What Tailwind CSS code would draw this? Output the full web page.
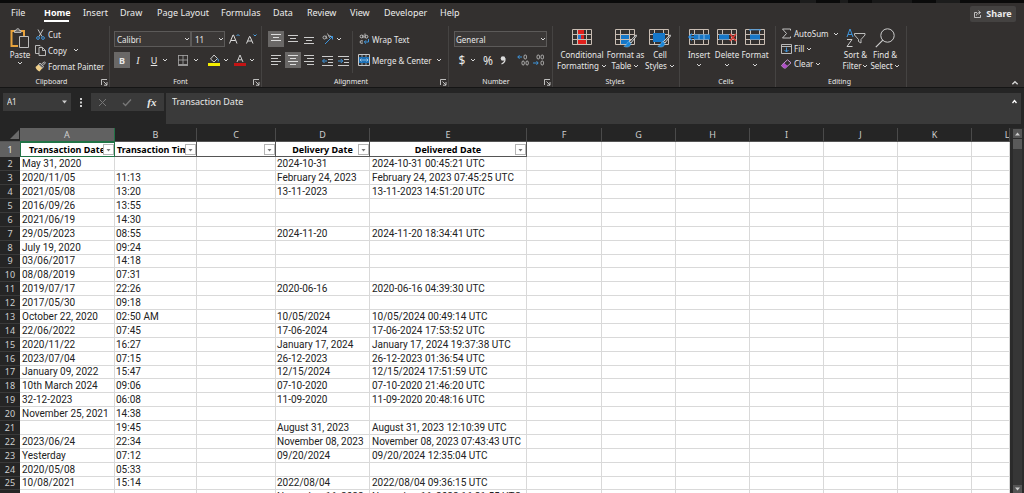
<!DOCTYPE html>
<html lang="en">
<head>
    <meta charset="UTF-8">
    <meta name="viewport" content="width=device-width, initial-scale=1.0">
    <title>Transactions</title>
    <script src="https://cdn.jsdelivr.net/npm/@tailwindcss/browser@4"></script>
</head>
<body class="h-screen overflow-hidden flex flex-col bg-[#252525] text-[#e8e8e8] font-['Noto_Sans',sans-serif] text-[8px] leading-[11px]">

    <!-- shared symbols -->
    <svg class="hidden">
        <symbol id="chev" viewBox="0 0 6 6"><path d="M1 2l2 2 2-2" fill="none" stroke="#d8d8d8" stroke-width="1"/></symbol>
        <symbol id="launch" viewBox="0 0 7 7"><path d="M.5 6V.5H6M2.500 2.500l3.500 3.500M6 3v3.200H3" fill="none" stroke="#cfcfcf" stroke-width=".9"/></symbol>
        <symbol id="grid" viewBox="0 0 20 17"><path d="M.5.5h19v15H.5zM.5 5.500h19M.5 10.500h19M5.500.5v15M14.500.5v15" fill="none" stroke="#c9bdb3" stroke-width="1"/></symbol>
        <symbol id="brush" viewBox="0 0 14 14"><path d="M13 .8L6.500 7.500l1.500 1.500L13.500 2z" fill="#4b4b4b" stroke="#ddd" stroke-width=".9"/><path d="M6 7.500C3.500 7.800 4.500 11 .8 12.300c3 1.500 7 .7 7-3z" fill="#1a86d8" stroke="#7fc0f0" stroke-width=".5"/></symbol>
    </svg>

    <div class="h-[3px] shrink-0 bg-[#0a0a0a] flex justify-end gap-6 pr-16">
        <span class="w-4 bg-[#1c1c1c]"></span>
        <span class="w-2 bg-[#1c1c1c]"></span>
        <span class="w-10 bg-[#181818]"></span>
        <span class="w-6 bg-[#1c1c1c]"></span>
    </div>

    <header class="shrink-0 bg-[#33302f]">
        <nav class="flex items-start h-[22px] pl-[11px] pr-2 pt-[3px] text-[9px] leading-[14px] text-[#ececec]">
            <a href="#" class="w-[33px]">File</a>
            <a href="#" class="w-[39px] font-bold"><span class="block w-[25px] border-b-2 border-white text-white">Home</span></a>
            <a href="#" class="w-[37px]">Insert</a>
            <a href="#" class="w-[37px]">Draw</a>
            <a href="#" class="w-[64px] whitespace-nowrap">Page Layout</a>
            <a href="#" class="w-[52px]">Formulas</a>
            <a href="#" class="w-[34px]">Data</a>
            <a href="#" class="w-[43px]">Review</a>
            <a href="#" class="w-[34px]">View</a>
            <a href="#" class="w-[56px]">Developer</a>
            <a href="#">Help</a>
            <button class="ml-auto h-4 w-[46px] flex items-center justify-center gap-1 bg-[#444241] rounded-xs font-bold">
                <svg class="w-2 h-2" viewBox="0 0 8 8"><path d="M3 2.500H.5v5h6V5M2.500 5.500C2.500 3.500 4 2.500 6 2.500M4.500.7l2 1.800-2 1.800" fill="none" stroke="#ddd" stroke-width=".8"/></svg>
                Share
            </button>
        </nav>

        <div class="flex h-[62px] pt-px">
            <!-- Clipboard -->
            <section class="w-[110px] shrink-0 border-r border-[#454342] flex flex-col pl-[8px]">
                <div class="flex h-[51px]">
                    <button class="w-[24px] h-[45px] flex flex-col items-center pt-[2px]">
                        <svg class="w-5 h-[21px] shrink-0" viewBox="0 0 20 21">
                            <path d="M8 18H1.500V3H14v5" fill="none" stroke="#e8a33d" stroke-width="2"/>
                            <path d="M4.500 4.500V2.500H6C6 0 9.500 0 9.500 2.500H11v2z" fill="#6b6b6b" stroke="#ccc" stroke-width=".8"/>
                            <path d="M9.500 8.500h9v11h-9z" fill="#33302f" stroke="#bdbdbd" stroke-width="1"/>
                        </svg>
                        <span>Paste</span>
                        <svg class="w-[6px] h-[6px]"><use href="#chev"/></svg>
                    </button>
                    <div class="flex flex-col pl-[3px] whitespace-nowrap">
                        <button class="h-4 flex items-center gap-[2px]">
                            <svg class="w-[11px] h-[11px]" viewBox="0 0 11 11"><path d="M3 .5l4 7M8 .5l-4 7" stroke="#c8c8c8" fill="none"/><circle cx="3" cy="9" r="1.400" fill="none" stroke="#3f95dc"/><circle cx="8" cy="9" r="1.400" fill="none" stroke="#3f95dc"/></svg>
                            Cut
                        </button>
                        <button class="h-4 flex items-center gap-[2px]">
                            <svg class="w-[11px] h-[11px]" viewBox="0 0 11 11"><path d="M4 8.500H.5v-8H5l1 1" fill="none" stroke="#c8c8c8" stroke-width=".9"/><path d="M4 2.500h3.500l3 3v5H4zM7.500 2.500v3h3" fill="none" stroke="#c8c8c8" stroke-width=".9"/></svg>
                            Copy
                            <svg class="w-[6px] h-[6px] ml-1"><use href="#chev"/></svg>
                        </button>
                        <button class="h-4 flex items-center gap-[2px]">
                            <svg class="w-[11px] h-[11px]" viewBox="0 0 11 11"><path d="M.5 6l3-2.500 4 3.500-3 3.500C2.500 10 1 8 .5 6z" fill="#f0cf8a"/><path d="M3.500 3.500L5 2l3.500 3.500L7.500 7zM6.500 3L9.500.8l1 1L8 4.500" fill="#5a5a5a" stroke="#ccc" stroke-width=".8"/></svg>
                            Format Painter
                        </button>
                    </div>
                </div>
                <div class="flex items-center text-[7px] leading-[10px]">
                    <span class="flex-1 text-center pr-[6px]">Clipboard</span>
                    <svg class="w-[7px] h-[7px] mr-[1px]"><use href="#launch"/></svg>
                </div>
            </section>

            <!-- Font -->
            <section class="w-[152px] shrink-0 border-r border-[#454342] flex flex-col pl-[4px]">
                <div class="flex flex-col h-[51px] pt-[5px] gap-[5px]">
                    <div class="flex h-4 items-center">
                        <div class="relative w-[77px] h-4">
                            <select aria-label="Font name" class="appearance-none w-full h-full bg-[#3b3837] border border-[#5c5a59] pl-[2px] leading-[13px]"><option>Calibri</option></select>
                            <svg class="absolute right-[1px] top-[5px] w-[6px] h-[6px]"><use href="#chev"/></svg>
                        </div>
                        <div class="relative w-[34px] h-4">
                            <select aria-label="Font size" class="appearance-none w-full h-full bg-[#3b3837] border border-[#5c5a59] pl-[3px] leading-[13px]"><option>11</option></select>
                            <svg class="absolute right-[1px] top-[5px] w-[6px] h-[6px]"><use href="#chev"/></svg>
                        </div>
                        <button aria-label="Increase font size" class="ml-1"><svg class="w-[11px] h-[12px]" viewBox="0 0 11 12"><path d="M.5 10.500L4 2h.5L8 10.500M2 7.500h4.500" fill="none" stroke="#ddd"/><path d="M7.500 3L9 1.500 10.500 3" fill="none" stroke="#4ea0e0"/></svg></button>
                        <button aria-label="Decrease font size" class="ml-[6px]"><svg class="w-[11px] h-[12px]" viewBox="0 0 11 12"><path d="M.5 10.500L3.500 3.500H4l3 7M1.800 8h4" fill="none" stroke="#ddd"/><path d="M7.500 1.500L9 3l1.500-1.500" fill="none" stroke="#4ea0e0"/></svg></button>
                    </div>
                    <div class="flex h-4 items-center">
                        <button class="w-4 h-4 bg-[#6a6867] font-bold text-[9px]">B</button>
                        <button class="w-4 italic font-['Liberation_Serif',serif] text-[10px]">I</button>
                        <button class="w-4 underline text-[9px]">U</button>
                        <svg class="w-[6px] h-[6px] mr-[9px]"><use href="#chev"/></svg>
                        <button aria-label="Borders"><svg class="w-[12px] h-[12px]" viewBox="0 0 12 12"><path d="M1 1.500h10M1.500 1v9M10.500 1v9M6 1v9M1 6h10" stroke="#aaa" stroke-width=".8" fill="none"/><path d="M1 11h10" stroke="#ddd" stroke-width="1.200"/></svg></button>
                        <svg class="w-[6px] h-[6px] ml-[4px] mr-[9px]"><use href="#chev"/></svg>
                        <button aria-label="Fill colour"><svg class="w-[12px] h-[12px]" viewBox="0 0 12 12"><path d="M6 1L2.500 5 6 8l3.500-3.500z" fill="none" stroke="#ddd" stroke-width=".9"/><path d="M9.500 4.500q1.500 1.500.7 3" stroke="#4ea0e0" fill="none"/><path d="M0 9h12v3H0z" fill="#f4ee00"/></svg></button>
                        <svg class="w-[6px] h-[6px] ml-[3px] mr-[5px]"><use href="#chev"/></svg>
                        <button aria-label="Font colour"><svg class="w-[12px] h-[12px]" viewBox="0 0 12 12"><path d="M3 8L6 1l3 7M4 5.800h4" fill="none" stroke="#ddd" stroke-width=".9"/><path d="M0 9h12v3H0z" fill="#c41414"/></svg></button>
                        <svg class="w-[6px] h-[6px] ml-[3px]"><use href="#chev"/></svg>
                    </div>
                </div>
                <div class="flex items-center text-[7px] leading-[10px]">
                    <span class="flex-1 text-center pr-[6px]">Font</span>
                    <svg class="w-[7px] h-[7px] mr-[1px]"><use href="#launch"/></svg>
                </div>
            </section>

            <!-- Alignment -->
            <section class="w-[187px] shrink-0 border-r border-[#454342] flex flex-col pl-[6px]">
                <div class="flex h-[51px] pt-[5px]">
                    <div class="w-[50px] grid grid-cols-3 gap-y-[5px] content-start">
                        <button aria-label="Top align" class="w-4 h-4 bg-[#6a6867] flex items-center justify-center"><svg class="w-3 h-3" viewBox="0 0 12 12"><path d="M1 1.500h10M3 4.500h6M1 7.500h10" stroke="#ddd"/></svg></button>
                        <button aria-label="Middle align" class="w-4 h-4 flex items-center justify-center"><svg class="w-3 h-3" viewBox="0 0 12 12"><path d="M1 2.500h10M3 5.500h6M1 8.500h10" stroke="#ccc"/></svg></button>
                        <button aria-label="Bottom align" class="w-4 h-4 flex items-center justify-center"><svg class="w-3 h-3" viewBox="0 0 12 12"><path d="M1 4.500h10M3 7.500h6M1 10.500h10" stroke="#ccc"/></svg></button>
                        <button aria-label="Align left" class="w-4 h-4 flex items-center justify-center"><svg class="w-3 h-3" viewBox="0 0 12 12"><path d="M1 1.500h10M1 4.500h7M1 7.500h10M1 10.500h7" stroke="#ccc"/></svg></button>
                        <button aria-label="Center" class="w-4 h-4 bg-[#6a6867] flex items-center justify-center"><svg class="w-3 h-3" viewBox="0 0 12 12"><path d="M1 1.500h10M3 4.500h6M1 7.500h10M3 10.500h6" stroke="#ddd"/></svg></button>
                        <button aria-label="Align right" class="w-4 h-4 flex items-center justify-center"><svg class="w-3 h-3" viewBox="0 0 12 12"><path d="M1 1.500h10M4 4.500h7M1 7.500h10M4 10.500h7" stroke="#ccc"/></svg></button>
                    </div>
                    <div class="w-[35px] pl-[4px] flex flex-col gap-[5px] border-r border-[#454342] mb-1">
                        <div class="h-4 flex items-center">
                            <button aria-label="Orientation"><svg class="w-3 h-3" viewBox="0 0 12 12"><path d="M3 11L10.500 3.500M7.500 3.500h3v3" fill="none" stroke="#3f95dc"/><circle cx="2.500" cy="4.500" r="1.500" fill="none" stroke="#ccc" stroke-width=".8"/><path d="M4 2.500L5 6M5.500.5l2 4q2-1 0-2.500" fill="none" stroke="#ccc" stroke-width=".8"/></svg></button>
                            <svg class="w-[6px] h-[6px] ml-[2px]"><use href="#chev"/></svg>
                        </div>
                        <div class="h-4 flex items-center gap-[5px]">
                            <button aria-label="Decrease indent"><svg class="w-[11px] h-[11px]" viewBox="0 0 11 11"><path d="M0 1.500h11M6 4.500h5M6 7.500h5M0 10.500h11" stroke="#ccc"/><path d="M5 6H.8M2.500 4l-2 2 2 2" fill="none" stroke="#3f95dc"/></svg></button>
                            <button aria-label="Increase indent"><svg class="w-[11px] h-[11px]" viewBox="0 0 11 11"><path d="M0 1.500h11M6 4.500h5M6 7.500h5M0 10.500h11" stroke="#ccc"/><path d="M0 6h4.500M2.800 4l2 2-2 2" fill="none" stroke="#3f95dc"/></svg></button>
                        </div>
                    </div>
                    <div class="flex flex-col gap-[5px] pl-[5px] whitespace-nowrap">
                        <button class="h-4 flex items-center gap-[2px]">
                            <svg class="w-3 h-3" viewBox="0 0 12 12"><circle cx="3.500" cy="3.500" r="1.400" fill="none" stroke="#ccc" stroke-width=".9"/><path d="M5 1.800V5.200M7 .5v4.700M5 8q-3-1-3 1t3 1" fill="none" stroke="#ccc" stroke-width=".9"/><circle cx="8.500" cy="3.700" r="1.400" fill="none" stroke="#ccc" stroke-width=".9"/><path d="M10.500 6v3H6.500M8 7.300L6.300 9 8 10.700" fill="none" stroke="#3f95dc"/></svg>
                            Wrap Text
                        </button>
                        <button class="h-4 flex items-center gap-[2px]">
                            <svg class="w-3 h-3" viewBox="0 0 12 12"><path d="M.5.5h11v11H.5z" fill="none" stroke="#c8c8c8"/><path d="M1 3h10v6H1z" fill="#1b6fb5"/><path d="M2 6h8M3.500 4.500L2 6l1.500 1.500M8.500 4.500L10 6 8.500 7.500M4 .5V3M8 .5V3M4 9v2.500M8 9v2.500" fill="none" stroke="#bcd8ee" stroke-width=".7"/></svg>
                            Merge &amp; Center
                            <svg class="w-[6px] h-[6px] ml-[2px]"><use href="#chev"/></svg>
                        </button>
                    </div>
                </div>
                <div class="flex items-center text-[7px] leading-[10px]">
                    <span class="flex-1 text-center pr-[6px]">Alignment</span>
                    <svg class="w-[7px] h-[7px] mr-[1px]"><use href="#launch"/></svg>
                </div>
            </section>

            <!-- Number -->
            <section class="w-[104px] shrink-0 border-r border-[#454342] flex flex-col pl-[5px]">
                <div class="flex flex-col h-[51px] pt-[5px] gap-[5px]">
                    <div class="relative w-[93px] h-4">
                        <select aria-label="Number format" class="appearance-none w-full h-full bg-[#3b3837] border border-[#5c5a59] pl-[1px] leading-[13px]"><option>General</option></select>
                        <svg class="absolute right-[1px] top-[5px] w-[6px] h-[6px]"><use href="#chev"/></svg>
                    </div>
                    <div class="flex h-4 items-center text-[12px]">
                        <button class="w-[16px]">$</button>
                        <svg class="w-[6px] h-[6px]"><use href="#chev"/></svg>
                        <button class="w-[24px]">%</button>
                        <button aria-label="Comma style" class="w-[8px]"><svg class="w-[6px] h-[9px]" viewBox="0 0 6 9"><circle cx="3" cy="2.500" r="2.300" fill="#ddd"/><path d="M5 2.500Q5.300 6.500 1.500 8" stroke="#ddd" fill="none" stroke-width="1.200"/></svg></button>
                        <button aria-label="Increase decimal" class="ml-[9px]"><svg class="w-[12px] h-[12px]" viewBox="0 0 12 12"><path d="M5 3H.8M2.500 1.200L.8 3l1.700 1.800" fill="none" stroke="#3f95dc"/><g fill="none" stroke="#ccc" stroke-width=".8"><rect x="7" y="1" width="2.500" height="4" rx="1.200"/><rect x="5" y="7" width="2.300" height="4" rx="1.200"/><rect x="9" y="7" width="2.300" height="4" rx="1.200"/></g></svg></button>
                        <button aria-label="Decrease decimal" class="ml-[4px]"><svg class="w-[12px] h-[12px]" viewBox="0 0 12 12"><path d="M0 9h5M3.500 7.200L5.200 9l-1.700 1.800" fill="none" stroke="#3f95dc"/><g fill="none" stroke="#ccc" stroke-width=".8"><rect x="4" y="1" width="2.500" height="4" rx="1.200"/><rect x="8" y="1" width="2.500" height="4" rx="1.200"/><rect x="8" y="7" width="2.500" height="4" rx="1.200"/></g></svg></button>
                    </div>
                </div>
                <div class="flex items-center text-[7px] leading-[10px]">
                    <span class="flex-1 text-center pr-[6px]">Number</span>
                    <svg class="w-[7px] h-[7px] mr-[1px]"><use href="#launch"/></svg>
                </div>
            </section>

            <!-- Styles -->
            <section class="w-[127px] shrink-0 border-r border-[#454342] flex flex-col pl-[4px]">
                <div class="flex h-[51px] pt-[3px] whitespace-nowrap">
                    <button class="w-[50px] flex flex-col items-center">
                        <svg class="w-5 h-[17px] mb-[3px]" viewBox="0 0 20 17"><path d="M5 1h7v4H5zM5 11h9v4H5z" fill="#e0201c"/><path d="M5 6h4v4H5z" fill="#2b7cd0"/><path d="M9 6h3v4H9z" fill="#e0201c"/><use href="#grid" width="20" height="17"/></svg>
                        Conditional
                        <span class="flex items-center gap-[2px]">Formatting <svg class="w-[6px] h-[6px]"><use href="#chev"/></svg></span>
                    </button>
                    <button class="w-[37px] flex flex-col items-center">
                        <svg class="w-[22px] h-5 shrink-0" viewBox="0 0 22 20"><path d="M6 6h9v9H6z" fill="#1677c8"/><use href="#grid" width="20" height="17"/><use href="#brush" x="8" y="5" width="14" height="14"/></svg>
                        Format as
                        <span class="flex items-center gap-[2px]">Table <svg class="w-[6px] h-[6px]"><use href="#chev"/></svg></span>
                    </button>
                    <button class="w-[32px] flex flex-col items-center">
                        <svg class="w-[22px] h-5 shrink-0" viewBox="0 0 22 20"><use href="#grid" width="20" height="17"/><path d="M4 4h12v9H4z" fill="#1677c8"/><use href="#brush" x="8" y="5" width="14" height="14"/></svg>
                        Cell
                        <span class="flex items-center gap-[2px]">Styles <svg class="w-[6px] h-[6px]"><use href="#chev"/></svg></span>
                    </button>
                </div>
                <div class="text-[7px] leading-[10px] text-center pr-[6px]">Styles</div>
            </section>

            <!-- Cells -->
            <section class="w-[96px] shrink-0 border-r border-[#454342] flex flex-col pl-[5px]">
                <div class="flex h-[51px] pt-[3px]">
                    <button class="w-[28px] h-[43px] flex flex-col items-center">
                        <svg class="w-[22px] h-[17px] mb-[3px] shrink-0" viewBox="0 0 22 17"><use href="#grid" x="1" width="20" height="17"/><path d="M6 5.500h16v5H6z" fill="#1677c8"/><path d="M6 8H.8M4 4.800L.8 8 4 11.200" fill="none" stroke="#2a90e8" stroke-width="1.300"/><path d="M11 5.500v5M16 5.500v5" stroke="#a9c9e6" stroke-width=".8"/></svg>
                        Insert
                        <svg class="w-[6px] h-[6px] mt-[2px]"><use href="#chev"/></svg>
                    </button>
                    <button class="w-[28px] h-[43px] flex flex-col items-center">
                        <svg class="w-[22px] h-[17px] mb-[3px] shrink-0" viewBox="0 0 22 17"><use href="#grid" x="1" width="20" height="17"/><path d="M3 5.500h10v5H3z" fill="#1677c8"/><path d="M14 5l6 7M20 5l-6 7" stroke="#d83a34" stroke-width="1.500"/></svg>
                        Delete
                        <svg class="w-[6px] h-[6px] mt-[2px]"><use href="#chev"/></svg>
                    </button>
                    <button class="w-[28px] h-[43px] flex flex-col items-center">
                        <svg class="w-5 h-[17px] mb-[3px] shrink-0" viewBox="0 0 20 17"><use href="#grid" width="20" height="17"/><path d="M5 5.500h10v5H5z" fill="#1677c8"/><path d="M5 0v2M15 0v2M5 .8h10" stroke="#3f95dc"/></svg>
                        Format
                        <svg class="w-[6px] h-[6px] mt-[2px]"><use href="#chev"/></svg>
                    </button>
                </div>
                <div class="text-[7px] leading-[10px] text-center pr-[8px]">Cells</div>
            </section>

            <!-- Editing -->
            <section class="w-[131px] shrink-0 border-r border-[#454342] flex flex-col pl-[5px]">
                <div class="flex h-[51px] whitespace-nowrap">
                    <div class="w-[60px] flex flex-col">
                        <button class="h-[15px] flex items-center gap-[2px]">
                            <svg class="w-[11px] h-[11px]" viewBox="0 0 10 11"><path d="M9 2.500V1H1l4 4.500L1 10h8V8.500" fill="none" stroke="#d0d0d0" stroke-width=".9"/></svg>
                            AutoSum
                            <svg class="w-[6px] h-[6px] ml-[2px]"><use href="#chev"/></svg>
                        </button>
                        <button class="h-[15px] flex items-center gap-[2px]">
                            <svg class="w-[11px] h-[10px]" viewBox="0 0 11 10"><path d="M.5.5h10v9H.5zM.5 2.500h10" fill="none" stroke="#c8c8c8" stroke-width=".9"/><path d="M5.500 3.500v4.500M3.500 6l2 2 2-2" fill="none" stroke="#3f95dc"/></svg>
                            Fill
                            <svg class="w-[6px] h-[6px]"><use href="#chev"/></svg>
                        </button>
                        <button class="h-[15px] flex items-center gap-[2px]">
                            <svg class="w-[11px] h-[10px]" viewBox="0 0 11 10"><path d="M.8 6L6.500.8l3.500 3L4.500 9H2.800L.8 7z" fill="none" stroke="#d9a3e6" stroke-width=".9"/><path d="M1 6.200L3.300 4l3.500 3-2.300 2H2.800z" fill="#b04fc8"/></svg>
                            Clear
                            <svg class="w-[6px] h-[6px]"><use href="#chev"/></svg>
                        </button>
                    </div>
                    <button class="w-[29px] h-[46px] flex flex-col items-center pt-[2px]">
                        <svg class="w-5 h-5 mb-px shrink-0" viewBox="0 0 20 20"><path d="M1 9L4 1l3 8M2 6.500h4" fill="none" stroke="#3f95dc"/><path d="M1 11.500h5L1 18.500h5.500" fill="none" stroke="#ccc"/><path d="M8.500 5.500h10.500v1.500l-4 4.500v3.500l-2.500-1.500v-2l-4-4.500z" fill="none" stroke="#ccc" stroke-width=".9"/></svg>
                        Sort &amp;
                        <span class="flex items-center gap-[1px]">Filter <svg class="w-[6px] h-[6px]"><use href="#chev"/></svg></span>
                    </button>
                    <button class="w-[30px] h-[46px] flex flex-col items-center pt-[2px]">
                        <svg class="w-5 h-5 mb-px shrink-0" viewBox="0 0 20 20"><circle cx="12.500" cy="7.500" r="6.700" fill="none" stroke="#ccc"/><path d="M7.800 12.200L.8 19.200" stroke="#ccc" stroke-width="1.200"/></svg>
                        Find &amp;
                        <span class="flex items-center gap-[1px]">Select <svg class="w-[6px] h-[6px]"><use href="#chev"/></svg></span>
                    </button>
                </div>
                <div class="text-[7px] leading-[10px] text-center pr-[8px]">Editing</div>
            </section>

            <button aria-label="Collapse ribbon" class="ml-auto self-end mr-[5px]"><svg class="w-2 h-2 rotate-180"><use href="#chev"/></svg></button>
        </div>
    </header>

    <!-- formula bar -->
    <div class="shrink-0 flex items-start h-[41px] pt-[5px] pl-[3px] pr-[3px] gap-[2px] border-t border-[#151515]">
        <div class="relative w-[68px] h-[18px]">
            <input type="text" aria-label="Name box" value="A1" class="w-full h-full bg-[#3a3a3a] pl-1 pb-[2px]">
            <svg class="absolute right-1 top-[7px] w-[5px] h-[4px]" viewBox="0 0 5 4"><path d="M0 .5h5L2.500 3.500z" fill="#ccc"/></svg>
        </div>
        <div class="w-[16px] h-[18px] flex items-center justify-center"><svg class="w-[2px] h-[9px]" viewBox="0 0 2 9"><path d="M0 0h2v2H0zM0 3.500h2v2H0zM0 7h2v2H0z" fill="#ccc"/></svg></div>
        <div class="w-[73px] h-[18px] bg-[#3a3a3a] flex items-center justify-around">
            <button aria-label="Cancel"><svg class="w-[9px] h-[9px]" viewBox="0 0 9 9"><path d="M1 1l7 7M8 1L1 8" stroke="#777"/></svg></button>
            <button aria-label="Enter"><svg class="w-[10px] h-[9px]" viewBox="0 0 10 9"><path d="M1 5l2.500 2.500L9 1.500" fill="none" stroke="#777" stroke-width="1.300"/></svg></button>
            <button class="italic font-bold font-['Liberation_Serif',serif] text-[11px]">fx</button>
        </div>
        <div class="relative flex-1 h-[31px]">
            <input type="text" aria-label="Formula" value="Transaction Date" class="block w-full h-full bg-[#3a3a3a] pl-[6px] pb-[14px] text-[9px]">
            <svg class="absolute right-1 top-[6px] w-[5px] h-[5px]" viewBox="0 0 5 5"><path d="M.5 4l2-2.500 2 2.500" fill="none" stroke="#fff" stroke-width="1.300"/></svg>
        </div>
    </div>

    <main class="flex-1 min-h-0 flex">
        <div class="flex-1 min-w-0 overflow-hidden">
            <table class="w-full table-fixed border-separate border-spacing-0 bg-white text-[#222] font-['Noto_Sans',sans-serif] text-[9px] leading-[13px] whitespace-nowrap">
                <colgroup>
                    <col class="w-[20px]"><col class="w-[95px]"><col class="w-[82px]"><col class="w-[79px]"><col class="w-[94px]"><col class="w-[157px]">
                    <col class="w-[75px]"><col class="w-[74px]"><col class="w-[74px]"><col class="w-[74px]"><col class="w-[74px]"><col class="w-[74px]"><col>
                </colgroup>
                <thead id="letters"></thead>
                <tbody id="sheet"></tbody>
            </table>
        </div>
        <!-- scrollbar -->
        <div class="w-[14px] bg-[#2b2b2b] flex flex-col items-center pt-[1px]">
            <div class="w-[9px] h-[9px] bg-[#555] flex items-center justify-center"><svg class="w-[5px] h-[4px]" viewBox="0 0 5 4"><path d="M0 3.500h5L2.500.5z" fill="#ccc"/></svg></div>
            <div class="w-[9px] h-[10px] mt-px bg-[#5a5a5a]"></div>
            <div class="w-[9px] flex-1 bg-[#363636]"></div>
            <div class="w-[9px] h-[8px] bg-[#555] flex items-center justify-center"><svg class="w-[5px] h-[4px]" viewBox="0 0 5 4"><path d="M0 .5h5L2.500 3.500z" fill="#ccc"/></svg></div>
        </div>
    </main>

    <script>
        const letters = ['A', 'B', 'C', 'D', 'E', 'F', 'G', 'H', 'I', 'J', 'K', 'L'];
        const headers = ['Transaction Date', 'Transaction Time', '', 'Delivery Date', 'Delivered Date'];
        const rows = [
            ['May 31, 2020', '', '2024-10-31', '2024-10-31 00:45:21 UTC'],
            ['2020/11/05', '11:13', 'February 24, 2023', 'February 24, 2023 07:45:25 UTC'],
            ['2021/05/08', '13:20', '13-11-2023', '13-11-2023 14:51:20 UTC'],
            ['2016/09/26', '13:55', '', ''],
            ['2021/06/19', '14:30', '', ''],
            ['29/05/2023', '08:55', '2024-11-20', '2024-11-20 18:34:41 UTC'],
            ['July 19, 2020', '09:24', '', ''],
            ['03/06/2017', '14:18', '', ''],
            ['08/08/2019', '07:31', '', ''],
            ['2019/07/17', '22:26', '2020-06-16', '2020-06-16 04:39:30 UTC'],
            ['2017/05/30', '09:18', '', ''],
            ['October 22, 2020', '02:50 AM', '10/05/2024', '10/05/2024 00:49:14 UTC'],
            ['22/06/2022', '07:45', '17-06-2024', '17-06-2024 17:53:52 UTC'],
            ['2020/11/22', '16:27', 'January 17, 2024', 'January 17, 2024 19:37:38 UTC'],
            ['2023/07/04', '07:15', '26-12-2023', '26-12-2023 01:36:54 UTC'],
            ['January 09, 2022', '15:47', '12/15/2024', '12/15/2024 17:51:59 UTC'],
            ['10th March 2024', '09:06', '07-10-2020', '07-10-2020 21:46:20 UTC'],
            ['32-12-2023', '06:08', '11-09-2020', '11-09-2020 20:48:16 UTC'],
            ['November 25, 2021', '14:38', '', ''],
            ['', '19:45', 'August 31, 2023', 'August 31, 2023 12:10:39 UTC'],
            ['2023/06/24', '22:34', 'November 08, 2023', 'November 08, 2023 07:43:43 UTC'],
            ['Yesterday', '07:12', '09/20/2024', '09/20/2024 12:35:04 UTC'],
            ['2020/05/08', '05:33', '', ''],
            ['10/08/2021', '15:14', '2022/08/04', '2022/08/04 09:36:15 UTC'],
            ['', '', 'November 16, 2022', 'November 16, 2022 16:21:55 UTC']
        ];

        const filterButton = '<button aria-label="Filter" class="absolute right-0 top-[2px] w-[11px] h-[11px] bg-white border border-[#b5b5b5] flex items-center justify-center"><svg class="w-[5px] h-[4px]" viewBox="0 0 5 4"><path d="M.5 1h4l-2 2.500z" fill="#777"/></svg></button>';

        // column letters
        let head = '<tr><th class="h-[14px] p-0 bg-[#252525] border-b border-[#555]"><svg class="ml-auto mr-[1px] w-[9px] h-[9px]" viewBox="0 0 9 9"><path d="M9 0v9H0z" fill="#6a6a6a"/></svg></th>';
        letters.forEach((letter, i) => {
            const tone = i === 0 ? 'bg-[#616161] border-[#217346]' : 'bg-[#252525] border-b-[#555] border-r-[#4a4a4a]';
            head += `<th class="h-[14px] p-0 overflow-hidden border-b border-r font-normal text-[#cfcfcf] ${tone}">${letter === 'L' ? '<span class="block w-[70px]">L</span>' : letter}</th>`;
        });
        document.getElementById('letters').innerHTML = head + '</tr>';

        // header row with filters
        let body = '<tr><th class="h-[15px] p-0 font-normal bg-[#616161] text-[#e4e4e4]">1</th>';
        letters.forEach((letter, i) => {
            if (i >= headers.length) {
                body += '<td class="p-0 border-b border-r border-[#d9d9d9]"></td>';
                return;
            }
            const edge = i === 0 ? 'outline outline-[#217346] -outline-offset-1' : '';
            body += `<th class="relative p-0 border-b border-r border-[#555] text-black ${edge}"><div class="overflow-hidden ${i === 1 ? 'text-left pl-[2px]' : 'text-center'}">${headers[i]}</div>${filterButton}</th>`;
        });
        body += '</tr>';

        rows.forEach((row, r) => {
            const height = r % 8 === 7 ? 'h-[13px] leading-[12px]' : 'h-[14px]';
            const cells = [row[0], row[1], '', row[2], row[3]];
            body += `<tr><th class="${height} p-0 font-normal bg-[#252525] text-[#cfcfcf] border-b border-[#3a3a3a]">${r + 2}</th>`;
            letters.forEach((letter, i) => {
                const pad = letter === 'A' || letter === 'E' ? 'pl-[2px]' : 'pl-[1px]';
                body += `<td class="${height} p-0 ${pad} border-b border-r border-[#d9d9d9] font-['Roboto',sans-serif] text-[10px]">${cells[i] || ''}</td>`;
            });
            body += '</tr>';
        });
        document.getElementById('sheet').innerHTML = body;
    </script>
</body>
</html>
